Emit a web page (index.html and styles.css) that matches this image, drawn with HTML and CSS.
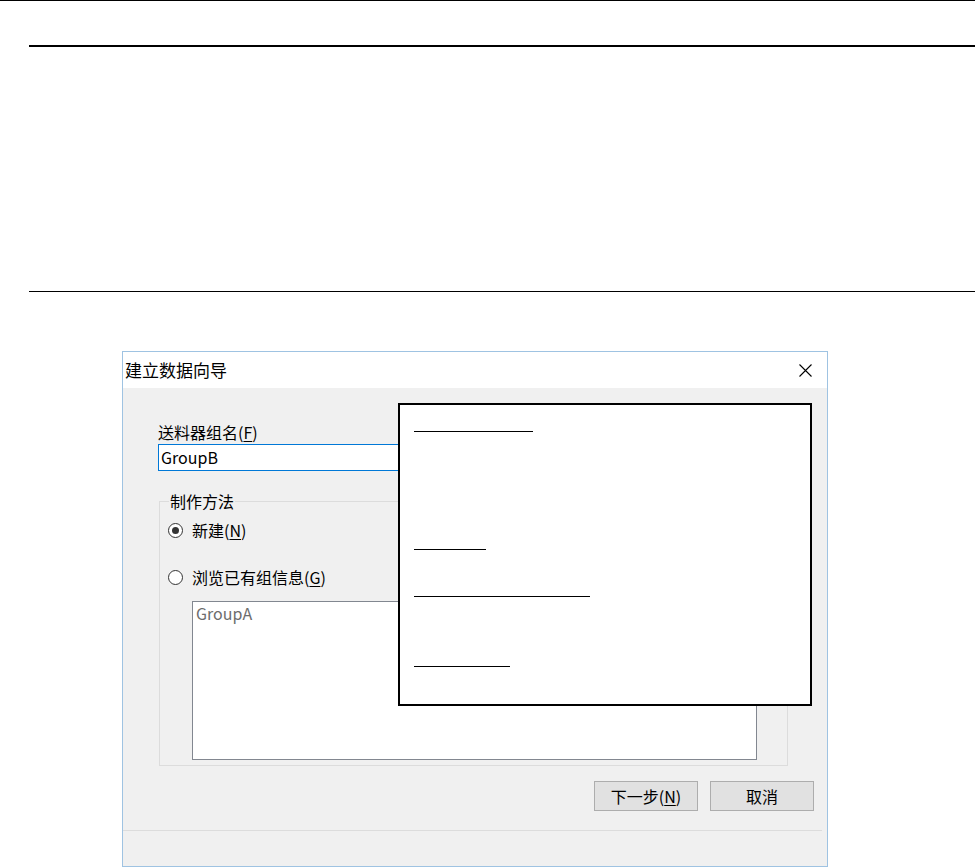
FILE: index.html
```html
<!DOCTYPE html>
<html lang="zh-CN">
<head>
<meta charset="utf-8">
<title>建立数据向导</title>
<link rel="stylesheet" href="styles.css">
</head>
<body>
<div class="top-rule"></div>
<div class="rule rule-thick"></div>
<div class="rule rule-thin"></div>

<div class="dialog">
  <div class="titlebar">
    <span class="title">建立数据向导</span>
    <svg class="close" width="13" height="13" viewBox="0 0 13 13" aria-hidden="true">
      <path d="M0.5 0.5 L12.5 12.5 M12.5 0.5 L0.5 12.5" stroke="#000" stroke-width="1.1" fill="none"/>
    </svg>
  </div>
  <div class="dlg-body">
    <div class="content">
      <div class="field-label">送料器组名(<u>F</u>)</div>
      <div class="textbox">GroupB</div>
      <fieldset class="group">
        <legend>制作方法</legend>
        <div class="radio-row"><span class="radio checked"></span><span>新建(<u>N</u>)</span></div>
        <div class="radio-row second"><span class="radio"></span><span>浏览已有组信息(<u>G</u>)</span></div>
        <div class="listbox"><div class="list-item">GroupA</div></div>
      </fieldset>
      <div class="buttons">
        <button class="btn">下一步(<u>N</u>)</button>
        <button class="btn">取消</button>
      </div>
    </div>
    <div class="separator"></div>
    <div class="status"></div>
  </div>

  <div class="callout">
    <div class="blank b1"></div>
    <div class="blank b2"></div>
    <div class="blank b3"></div>
    <div class="blank b4"></div>
  </div>
</div>
</body>
</html>
```

FILE: styles.css
```css
html, body {
  margin: 0;
  padding: 0;
  background: #fff;
}
body {
  font-family: "Noto Sans CJK SC", "Microsoft YaHei", sans-serif;
  font-size: 16px;
  color: #000;
  width: 975px;
  height: 867px;
  overflow: hidden;
}

.top-rule {
  height: 1px;
  background: #000;
}
.rule {
  margin-left: 29px;
  background: #000;
}
.rule-thick {
  margin-top: 44px;
  height: 2px;
}
.rule-thin {
  margin-top: 244px;
  height: 1px;
}

.dialog {
  position: relative;
  margin-top: 59px;
  margin-left: 122px;
  width: 706px;
  height: 516px;
  box-sizing: border-box;
  border: 1px solid #9fc3e2;
  display: flex;
  flex-direction: column;
}

.titlebar {
  height: 36px;
  flex: none;
  background: #fff;
  display: flex;
  align-items: center;
  justify-content: space-between;
  padding: 0 15px 0 2px;
}
.title {
  font-size: 17px;
  line-height: 20px;
}
.close {
  display: block;
}

.dlg-body {
  flex: 1;
  background: #f0f0f0;
  display: flex;
  flex-direction: column;
}
.content {
  padding: 34px 13px 0 35px;
}
.field-label {
  line-height: 20px;
}
u {
  text-decoration: underline;
  text-underline-offset: 2px;
}
.textbox {
  margin-top: 2px;
  width: 630px;
  height: 27px;
  box-sizing: border-box;
  border: 1px solid #0078d7;
  background: #fff;
  padding-left: 2px;
  line-height: 25px;
}

.group {
  margin: 20px 0 0 1px;
  width: 629px;
  box-sizing: border-box;
  border: 1px solid #dcdcdc;
  padding: 9px 0 5px 0;
  min-width: 0;
}
.group legend {
  margin-left: 9px;
  padding: 0 1px;
  line-height: 20px;
}
.radio-row {
  display: flex;
  align-items: center;
  gap: 9px;
  height: 20px;
  padding-left: 8px;
  line-height: 20px;
}
.radio-row.second {
  margin-top: 27px;
}
.radio {
  width: 15px;
  height: 15px;
  box-sizing: border-box;
  border: 1px solid #333;
  border-radius: 50%;
  background: #fff;
  display: flex;
  align-items: center;
  justify-content: center;
}
.radio.checked::after {
  content: "";
  width: 7px;
  height: 7px;
  border-radius: 50%;
  background: #333;
}
.listbox {
  margin: 14px 0 0 32px;
  width: 565px;
  height: 159px;
  box-sizing: border-box;
  border: 1px solid #828790;
  background: #fff;
}
.list-item {
  padding: 1px 3px;
  line-height: 20px;
  color: #6d6d6d;
}

.buttons {
  margin-top: 15px;
  display: flex;
  justify-content: flex-end;
  gap: 12px;
}
.btn {
  width: 104px;
  height: 30px;
  box-sizing: border-box;
  border: 1px solid #adadad;
  background: #e1e1e1;
  padding: 0;
  font-family: inherit;
  font-size: 16px;
  color: #000;
  line-height: 20px;
}

.separator {
  margin: 19px 5px 0 0;
  height: 1px;
  background: #dcdcdc;
}
.status {
  flex: 1;
}

.callout {
  position: absolute;
  left: 275px;
  top: 51px;
  width: 414px;
  height: 303px;
  box-sizing: border-box;
  border: 2px solid #000;
  background: #fff;
  padding-left: 14px;
}
.blank {
  height: 1px;
  background: #000;
}
.b1 { margin-top: 26px; width: 119px; }
.b2 { margin-top: 117px; width: 72px; }
.b3 { margin-top: 46px; width: 176px; }
.b4 { margin-top: 69px; width: 96px; }
```
